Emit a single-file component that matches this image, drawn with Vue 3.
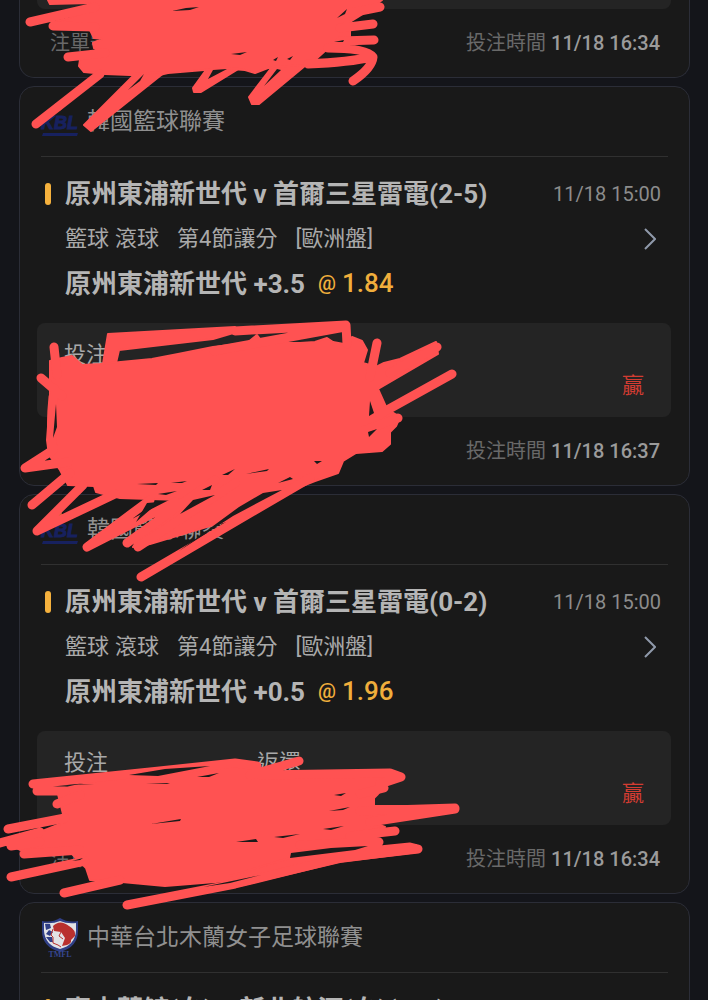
<template>
  <div class="screen">
    <main class="bet-list">
      <article
        v-for="bet in bets"
        :key="bet.id"
        class="bet-card"
        :class="{ 'is-tail': bet.tail }"
      >
        <template v-if="!bet.tail">
          <header class="league">
            <svg v-if="bet.logo === 'kbl'" class="league-logo" viewBox="0 0 38 40">
              <circle cx="17" cy="5" r="4" fill="#c8642d" />
              <g class="kbl-mark">
                <text x="0" y="27" font-size="18" stroke="#17215f" stroke-width="1">KBL</text>
                <path d="M2 31H37L36 34H1Z" />
              </g>
            </svg>
            <svg v-else class="league-logo" viewBox="0 0 38 40">
              <path d="M1 3Q11 5 19 0Q27 5 37 3V13Q37 29 19 34Q1 29 1 13Z" fill="#303f86" />
              <path d="M3 5Q12 6 19 3Q26 6 35 5V13Q34 27 19 31Q4 27 3 13Z" fill="#e2e2e5" />
              <path d="M4 6L9 6 10 10 5 12ZM8 12L12 14 9 18 5 16ZM5 19L11 19 12 24 9 24Z" fill="#303f86" />
              <path d="M12 8Q19 1 28 8Q35 12 34 18L30 22Q31 25 26 27L21 28 24 20 20 14 13 13Z" fill="#b9302e" />
              <path d="M12 11L10 17 12 19 12 25 17 27 20 29M20 14L18 18 22 21" fill="none" stroke="#b9302e" />
              <text x="19" y="39" text-anchor="middle" font-family="Liberation Serif" font-size="8" font-weight="700" fill="#35468f">TMFL</text>
            </svg>
            <span class="league-name">{{ bet.league }}</span>
          </header>

          <section class="match">
            <div class="match-row title-row">
              <h3>{{ bet.match }}</h3>
              <time v-if="bet.matchTime">{{ bet.matchTime }}</time>
            </div>
            <template v-if="bet.pick">
              <div class="match-row market-row">
                <div class="market">
                  <span class="sport"><span>籃球</span><span>滾球</span></span>
                  <span>第4節讓分</span>
                  <span>[歐洲盤]</span>
                </div>
                <button type="button" class="detail-btn" aria-label="注單詳情">
                  <svg viewBox="0 0 12 22" width="12" height="22">
                    <path d="M1 1L11 11L1 21" fill="none" stroke="#8f99aa" stroke-width="2" />
                  </svg>
                </button>
              </div>
              <div class="match-row pick-row">
                <strong>{{ bet.pick }}</strong>
                <span class="odds"><span class="at">@</span>{{ bet.odds }}</span>
              </div>
            </template>
          </section>
        </template>

        <section v-if="bet.tail" class="settle"></section>
        <section v-else-if="bet.pick" class="settle">
          <span>投注</span>
          <span>返還</span>
          <span class="result">贏</span>
        </section>

        <footer v-if="bet.placedAt" class="bet-footer">
          <span>注單號</span>
          <span>投注時間 <time>{{ bet.placedAt }}</time></span>
        </footer>
      </article>
    </main>

    <!-- marker strokes over the private amounts -->
    <svg class="marker" viewBox="0 0 708 1000" width="708" height="1000" aria-hidden="true">
      <g class="fill">
        <path d="M48 0L50 4 90 3 92 5 70 18 52 22 53 28 90 30 94 38 102 39 93 43 94 48 98 50 80 60 79 66 84 72 105 74 155 76 168 73 204 70 232 69 245 70 255 73 268 68 300 67 315 60 325 51 345 46 350 36 350 22 366 12 382 0Z" />
        <path d="M135 74L165 72 91 131 84 125ZM206 70L193 88 194 92 201 92 240 68ZM272 67L249 97 252 104 259 104 306 65Z" />
        <path d="M103 364L108 334 235 327 240 331 213 339 119 350 116 363Z" />
        <path d="M50 376L50 361 62 358 72 356 82 365 100 364 152 359 178 354 213 347 247 343 257 335 263 343 300 343 315 342 327 338 333 342 349 345 352 337 362 341 367 350 363 363 376 367 384 363 400 359 436 342 438 354 378 389 387 409 400 417 396 426 390 432 390 444 382 451 356 453 343 461 338 473 315 481 292 490 230 520 150 544 133 547 140 535 180 500 120 498 96 492 94 486 68 485 60 470 49 455 47 440 50 400 50 394Z" />
        <path d="M57 790L110 778 180 770 240 765 260 768 290 775 385 776 385 785 378 794 374 798 374 806 440 806 440 812 372 822 385 827 365 832 378 842 340 848 290 858 240 880 165 886 122 882 90 880 86 868 70 852 25 852 12 846 40 832 65 822Z" />
        <path d="M230 876L290 858 355 850 416 845 418 852 340 862 230 888Z" />
      </g>
      <g class="stroke">
        <path d="M30 22L95 7M53 26L95 27M68 57L105 53M100 74L36 124M308 64Q350 62 372 57M328 48Q366 48 373 57Q372 68 353 81M340 15L380 7M340 28L373 24M340 41L374 40" />
        <path d="M54 347L57 375M41 378L62 396M53 397Q50 426 53 450L25 468L68 462M70 473L32 505M83 485L37 531L115 494M150 500L87 547L175 502M215 480L127 543M235 483L138 547M310 478L141 577" />
        <path d="M235 331L346 325L347 344M345 327L214 351M377 343L370 377M437 347L390 373M452 374L380 414M398 418L365 430" />
        <path d="M33 784L150 772 235 763 257 766M37 791L65 791M57 804L80 795M8 829L65 818M0 843L40 832M11 846L40 842M24 854L80 850M11 877L85 861M64 893L120 880M127 905L235 884 340 858 418 849 410 847 330 855M299 761L250 775M260 775L390 773 401 777 380 784M384 788L360 794M455 808L360 811M455 809L370 822M395 831L350 836M379 842L300 845" />
      </g>
      <g class="gap">
        <path d="M56 404L53 438L57 427ZM172 11L186 8 199 7 190 10ZM337 18L347 9 345 14ZM128 90L144 74 140 81ZM208 79L213 70 227 69ZM264 86L277 69 281 70ZM273 60L278 57 276 61ZM287 59L293 56 290 60ZM231 54L247 52 240 55ZM334 42L344 40 343 42Z" />
        <path d="M370 401L374 413 369 416ZM368 432L377 429 369 437ZM222 475L235 469 228 475ZM246 474L269 469 267 471ZM137 484L158 483 156 485ZM171 483L187 481 182 483ZM158 494L177 491 166 495ZM202 490L212 485 210 490ZM147 503L159 502 136 522ZM180 514L193 500 215 495ZM278 483L290 477 293 479ZM263 493L282 490 233 516 179 551 239 507ZM314 461L322 461 317 464Z" />
        <path d="M129 775L165 769 210 766 158 776ZM197 777L219 773 209 777ZM146 784L170 783 167 784ZM66 785L94 784 80 785ZM151 824L181 819 180 821ZM236 842L256 839 258 842ZM274 837L300 834 283 838ZM323 829L344 826 331 830ZM329 811L350 807 343 810ZM334 795L346 793 341 796ZM291 853L331 848 368 846 355 850 290 858ZM203 887L261 875 230 883ZM72 861L83 858 80 860Z" />
      </g>
    </svg>
  </div>
</template>

<script setup>
const bets = [
  { id: 1, tail: true, placedAt: '11/18 16:34' },
  {
    id: 2,
    logo: 'kbl',
    league: '韓國籃球聯賽',
    match: '原州東浦新世代 v 首爾三星雷電(2-5)',
    matchTime: '11/18 15:00',
    pick: '原州東浦新世代 +3.5',
    odds: '1.84',
    placedAt: '11/18 16:37'
  },
  {
    id: 3,
    logo: 'kbl',
    league: '韓國籃球聯賽',
    match: '原州東浦新世代 v 首爾三星雷電(0-2)',
    matchTime: '11/18 15:00',
    pick: '原州東浦新世代 +0.5',
    odds: '1.96',
    placedAt: '11/18 16:34'
  },
  {
    id: 4,
    logo: 'tmfl',
    league: '中華台北木蘭女子足球聯賽',
    match: '臺中藍鯨(女) v 新北航源(女)(1-1)'
  }
]
</script>

<style>
body {
  margin: 0;
  background: #14151a;
}
</style>

<style scoped>
.screen {
  position: relative;
  height: 100vh;
  overflow: hidden;
  background: #14151a;
  color: #a9a9a9;
  font-family: Roboto, "Noto Sans CJK TC", sans-serif;
  font-size: 22px;
}

.bet-list {
  display: flex;
  flex-direction: column;
  gap: 8px;
  padding: 0 18px 0 19px;
}

.bet-card {
  flex-shrink: 0;
  background: #191919;
  border: 1px solid #2b2d37;
  border-radius: 15px;
}

.bet-card.is-tail {
  border-top: 0;
  border-radius: 0 0 15px 15px;
}

.league {
  display: flex;
  align-items: center;
  gap: 8px;
  height: 69px;
  margin: 0 21px;
  border-bottom: 1px solid #303030;
}

.league-logo {
  width: 38px;
  height: 40px;
  overflow: visible;
}

.kbl-mark {
  fill: #17215f;
  font-family: "Liberation Sans", sans-serif;
  font-style: italic;
  font-weight: 700;
}

.league-name {
  padding-bottom: 6px;
  font-size: 23px;
  color: #909090;
}

.match {
  padding: 16px 28px 0 25px;
}

.match-row {
  display: flex;
  align-items: center;
  justify-content: space-between;
  padding-left: 20px;
  white-space: nowrap;
}

.title-row {
  height: 42px;
  padding-left: 0;
}

.title-row h3 {
  display: flex;
  align-items: center;
  gap: 14px;
  margin: 0;
  font-size: 26px;
  line-height: 42px;
  font-weight: 700;
  color: #b5b5b5;
}

.title-row h3::before {
  content: "";
  width: 6px;
  height: 22px;
  border-radius: 3px;
  background: #f5b13d;
}

.title-row time {
  font-size: 20px;
  color: #8c8c8c;
}

.market-row {
  height: 48px;
}

.market {
  display: flex;
  gap: 18px;
  padding-bottom: 6px;
}

.sport {
  display: flex;
  gap: 6px;
}

.detail-btn {
  display: flex;
  margin: 0;
  padding: 0 5px;
  border: 0;
  background: none;
  cursor: pointer;
}

.pick-row {
  justify-content: flex-start;
  gap: 13px;
  height: 40px;
  font-size: 26px;
}

.pick-row strong {
  padding-bottom: 4px;
  color: #b5b5b5;
}

.odds {
  display: flex;
  align-items: center;
  gap: 6px;
  font-weight: 500;
  color: #f0ae3c;
}

.at {
  font-size: 20px;
}

.settle {
  display: grid;
  grid-template-columns: repeat(3, 1fr);
  grid-template-rows: 30px 32px;
  align-items: center;
  margin: 20px 18px 0 17px;
  padding: 14px 27px 18px;
  border-radius: 8px;
  background: #242424;
}

.is-tail .settle {
  display: block;
  height: 9px;
  margin-top: 0;
  padding: 0;
  border-radius: 0 0 8px 8px;
}

.result {
  grid-row: 2;
  grid-column: 3;
  justify-self: end;
  color: #d33c32;
}

.bet-footer {
  display: flex;
  align-items: center;
  justify-content: space-between;
  height: 64px;
  padding: 0 29px 4px 30px;
  font-size: 20px;
  color: #696969;
}

.bet-footer time {
  font-weight: 500;
  color: #9b9b9b;
}

.marker {
  position: absolute;
  top: 0;
  left: 0;
  pointer-events: none;
}

.fill {
  fill: #ff5252;
  stroke: #ff5252;
  stroke-width: 2;
  stroke-linejoin: round;
}

.stroke {
  fill: none;
  stroke: #ff5252;
  stroke-width: 9;
  stroke-linecap: round;
  stroke-linejoin: round;
}

.gap {
  fill: #1b1b1b;
}
</style>
